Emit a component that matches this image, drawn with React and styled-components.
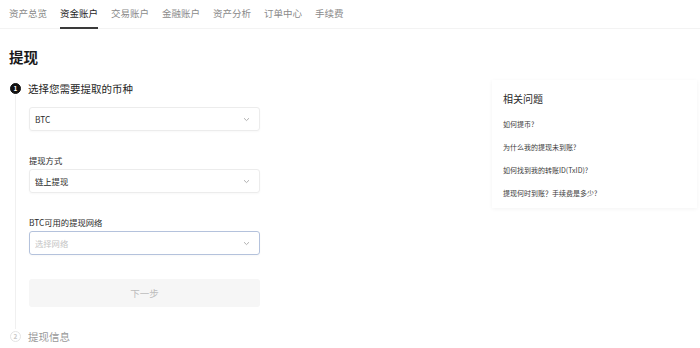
import React from 'react';
import styled, { createGlobalStyle } from 'styled-components';

const GlobalStyle = createGlobalStyle`
    html, body {
        margin: 0;
        padding: 0;
        background: #ffffff;
    }
    body {
        font-family: "Noto Sans CJK SC", "Noto Sans", sans-serif;
        color: #1e1e1e;
    }
`;

const Page = styled.div`
    width: 700px;
    height: 348px;
    overflow: hidden;
    display: flex;
    flex-direction: column;
`;

const Nav = styled.nav`
    display: flex;
    gap: 13px;
    padding: 0 0 0 9px;
    height: 29px;
    border-bottom: 1px solid #f3f3f3;
    box-sizing: border-box;
`;

const Tab = styled.div`
    font-size: 9.5px;
    line-height: 27px;
    height: 29px;
    box-sizing: border-box;
    color: ${p => (p.$active ? '#1e1e1e' : '#8a8a8a')};
    border-bottom: 2px solid ${p => (p.$active ? '#3a3a3a' : 'transparent')};
`;

const Body = styled.div`
    display: flex;
    justify-content: space-between;
`;

const Main = styled.div`
    padding: 17px 0 0 9px;
    width: 260px;
`;

const Title = styled.h1`
    margin: 0 0 13px;
    font-size: 14.5px;
    font-weight: 700;
    line-height: 22px;
    color: #1a1a1a;
`;

const StepHead = styled.div`
    display: flex;
    align-items: center;
    gap: 7px;
    height: 14px;
`;

const StepDot = styled.span`
    width: 11px;
    height: 11px;
    border-radius: 50%;
    margin-left: 1px;
    box-sizing: border-box;
    display: flex;
    align-items: center;
    justify-content: center;
    font-size: 6.5px;
    font-weight: 700;
    background: ${p => (p.$done ? '#111' : '#fff')};
    color: ${p => (p.$done ? '#fff' : '#c8c8c8')};
    border: 1px solid ${p => (p.$done ? '#111' : '#e4e4e4')};
`;

const StepLabel = styled.span`
    font-size: 10.5px;
    color: ${p => (p.$muted ? '#9a9a9a' : '#1e1e1e')};
`;

const StepBody = styled.div`
    margin-left: 6px;
    border-left: 1px solid #f0f0f0;
    padding: 12px 0 22px 13px;
    display: flex;
    flex-direction: column;
`;

const Field = styled.div`
    display: flex;
    flex-direction: column;
    gap: 3px;
    margin-bottom: 24px;
`;

const Label = styled.div`
    font-size: 8.3px;
    line-height: 11px;
    color: #2a2a2a;
`;

const Select = styled.div`
    height: 24px;
    width: 231px;
    box-sizing: border-box;
    border: 1px solid ${p => (p.$focus ? '#b4c2dc' : '#ececec')};
    border-radius: 3px;
    box-shadow: 0 1px 2px rgba(0, 0, 0, 0.03);
    display: flex;
    align-items: center;
    justify-content: space-between;
    padding: 0 9px 0 5px;
    font-size: 8.3px;
    color: ${p => (p.$placeholder ? '#c4c4c4' : '#2a2a2a')};
`;

const Chevron = () => (
    <svg width="7" height="5" viewBox="0 0 7 5">
        <path d="M1 1.2 L3.5 3.6 L6 1.2" fill="none" stroke="#a8a8a8" strokeWidth="0.9" />
    </svg>
);

const NextButton = styled.div`
    width: 231px;
    height: 28px;
    border-radius: 3px;
    background: #f6f6f6;
    color: #bcbcbc;
    font-size: 9.5px;
    display: flex;
    align-items: center;
    justify-content: center;
`;

const Aside = styled.aside`
    margin-top: 51px;
    width: 205px;
    margin-right: 3px;
    background: #fff;
    box-shadow: 0 1px 4px rgba(0, 0, 0, 0.05);
    padding: 12px 0 10px 11px;
    box-sizing: border-box;
    height: 128px;
`;

const AsideTitle = styled.div`
    font-size: 10px;
    color: #2a2a2a;
    line-height: 14px;
    margin-bottom: 13px;
`;

const Question = styled.div`
    font-size: 7px;
    color: #3a3a3a;
    line-height: 10px;
    margin-bottom: 13px;
`;

const tabs = ['资产总览', '资金账户', '交易账户', '金融账户', '资产分析', '订单中心', '手续费'];
const questions = [
    '如何提币?',
    '为什么我的提现未到账?',
    '如何找到我的转账ID(TxID)?',
    '提现何时到账？手续费是多少?',
];

export default function App() {
    return (
        <Page>
            <GlobalStyle />
            <Nav>
                {tabs.map(t => (
                    <Tab key={t} $active={t === '资金账户'}>{t}</Tab>
                ))}
            </Nav>
            <Body>
                <Main>
                    <Title>提现</Title>
                    <StepHead>
                        <StepDot $done>1</StepDot>
                        <StepLabel>选择您需要提取的币种</StepLabel>
                    </StepHead>
                    <StepBody>
                        <Field>
                            <Select>BTC<Chevron /></Select>
                        </Field>
                        <Field>
                            <Label>提现方式</Label>
                            <Select>链上提现<Chevron /></Select>
                        </Field>
                        <Field>
                            <Label>BTC可用的提现网络</Label>
                            <Select $focus $placeholder>选择网络<Chevron /></Select>
                        </Field>
                        <NextButton>下一步</NextButton>
                    </StepBody>
                    <StepHead>
                        <StepDot>2</StepDot>
                        <StepLabel $muted>提现信息</StepLabel>
                    </StepHead>
                </Main>
                <Aside>
                    <AsideTitle>相关问题</AsideTitle>
                    {questions.map(q => (
                        <Question key={q}>{q}</Question>
                    ))}
                </Aside>
            </Body>
        </Page>
    );
}
